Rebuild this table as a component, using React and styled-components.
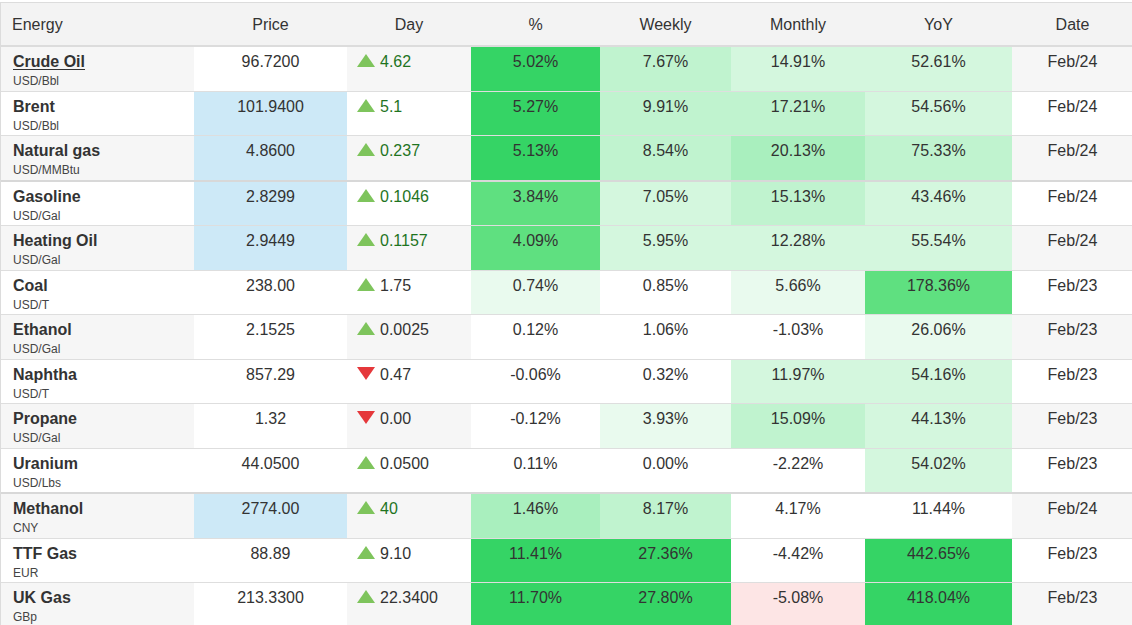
import React from 'react';
import styled, { createGlobalStyle } from 'styled-components';

const Global = createGlobalStyle`
  html, body {
    margin: 0;
    padding: 0;
    background: #fff;
  }
  body {
    font-family: "Liberation Sans", Arial, sans-serif;
    color: #333;
    overflow: hidden;
  }
`;

const COLS = '193px 153px 124px 129px 131px 134px 147px 121px';

const SHADES = {
  g5: '#35d465',
  g4: '#5fe080',
  g3b: '#a9efbe',
  g3: '#c0f3cf',
  g2: '#d4f7de',
  g1: '#e9faee',
  r1: '#fde5e5',
  w: '#ffffff',
};

const Wrap = styled.div`
  padding-top: 2px;
  width: 1132px;
`;

const Table = styled.div`
  border-left: 1px solid #dcdcdc;
  border-top: 1px solid #dcdcdc;
`;

const HeadRow = styled.div`
  display: grid;
  grid-template-columns: ${COLS};
  height: 42px;
  background: #f3f3f3;
  border-bottom: 2px solid #dcdcdc;
`;

const HeadCell = styled.div`
  display: flex;
  align-items: center;
  justify-content: ${p => (p.$left ? 'flex-start' : 'center')};
  padding-left: ${p => (p.$left ? '11px' : '0')};
  padding-top: 2px;
  font-size: 16px;
  color: #333;
`;

const Row = styled.div`
  display: grid;
  grid-template-columns: ${COLS};
  height: 43.5px;
  border-bottom: ${p => (p.$thick ? '2px solid #d8d8d8' : '1px solid #dedede')};
`;

const Cell = styled.div`
  background: ${p => p.$bg || (p.$striped ? '#f6f6f6' : '#fff')};
  padding-top: 5px;
  text-align: center;
  font-size: 16px;
  line-height: 20px;
  color: #333;
  overflow: hidden;
`;

const NameCell = styled(Cell)`
  text-align: left;
  padding-left: 12px;
`;

const Name = styled.div`
  font-weight: bold;
  font-size: 16px;
  line-height: 20px;
  color: #333;
  text-decoration: ${p => (p.$hover ? 'underline' : 'none')};
  text-underline-offset: 2px;
`;

const Unit = styled.div`
  font-size: 12px;
  line-height: 14px;
  margin-top: 2px;
  color: #444;
`;

const DayCell = styled(Cell)`
  display: flex;
  align-items: flex-start;
  gap: 5px;
  text-align: left;
  padding-left: 10px;
`;

const DayValue = styled.span`
  color: ${p => (p.$fresh ? '#1f741f' : '#333')};
`;

const Arrow = styled.svg`
  margin-top: 2px;
  flex: none;
`;

const Up = () => (
  <Arrow width="18" height="13" viewBox="0 0 18 13">
    <polygon points="9,0 18,13 0,13" fill="#7ec45c" />
  </Arrow>
);

const Down = () => (
  <Arrow width="18" height="13" viewBox="0 0 18 13">
    <polygon points="0,0 18,0 9,13" fill="#e5383b" />
  </Arrow>
);

const rows = [
  { name: 'Crude Oil', unit: 'USD/Bbl', price: '96.7200', blue: false, day: '4.62', up: true, fresh: true,
    pct: ['5.02%', 'g5'], w: ['7.67%', 'g3'], m: ['14.91%', 'g2'], y: ['52.61%', 'g2'], date: 'Feb/24', hover: true },
  { name: 'Brent', unit: 'USD/Bbl', price: '101.9400', blue: true, day: '5.1', up: true, fresh: true,
    pct: ['5.27%', 'g5'], w: ['9.91%', 'g3'], m: ['17.21%', 'g3'], y: ['54.56%', 'g2'], date: 'Feb/24' },
  { name: 'Natural gas', unit: 'USD/MMBtu', price: '4.8600', blue: true, day: '0.237', up: true, fresh: true,
    pct: ['5.13%', 'g5'], w: ['8.54%', 'g3'], m: ['20.13%', 'g3b'], y: ['75.33%', 'g3'], date: 'Feb/24', thick: true },
  { name: 'Gasoline', unit: 'USD/Gal', price: '2.8299', blue: true, day: '0.1046', up: true, fresh: true,
    pct: ['3.84%', 'g4'], w: ['7.05%', 'g2'], m: ['15.13%', 'g3'], y: ['43.46%', 'g2'], date: 'Feb/24' },
  { name: 'Heating Oil', unit: 'USD/Gal', price: '2.9449', blue: true, day: '0.1157', up: true, fresh: true,
    pct: ['4.09%', 'g4'], w: ['5.95%', 'g2'], m: ['12.28%', 'g2'], y: ['55.54%', 'g2'], date: 'Feb/24' },
  { name: 'Coal', unit: 'USD/T', price: '238.00', blue: false, day: '1.75', up: true, fresh: false,
    pct: ['0.74%', 'g1'], w: ['0.85%', 'w'], m: ['5.66%', 'g1'], y: ['178.36%', 'g4'], date: 'Feb/23' },
  { name: 'Ethanol', unit: 'USD/Gal', price: '2.1525', blue: false, day: '0.0025', up: true, fresh: false,
    pct: ['0.12%', 'w'], w: ['1.06%', 'w'], m: ['-1.03%', 'w'], y: ['26.06%', 'g1'], date: 'Feb/23' },
  { name: 'Naphtha', unit: 'USD/T', price: '857.29', blue: false, day: '0.47', up: false, fresh: false,
    pct: ['-0.06%', 'w'], w: ['0.32%', 'w'], m: ['11.97%', 'g2'], y: ['54.16%', 'g2'], date: 'Feb/23' },
  { name: 'Propane', unit: 'USD/Gal', price: '1.32', blue: false, day: '0.00', up: false, fresh: false,
    pct: ['-0.12%', 'w'], w: ['3.93%', 'g1'], m: ['15.09%', 'g3'], y: ['44.13%', 'g2'], date: 'Feb/23' },
  { name: 'Uranium', unit: 'USD/Lbs', price: '44.0500', blue: false, day: '0.0500', up: true, fresh: false,
    pct: ['0.11%', 'w'], w: ['0.00%', 'w'], m: ['-2.22%', 'w'], y: ['54.02%', 'g2'], date: 'Feb/23', thick: true },
  { name: 'Methanol', unit: 'CNY', price: '2774.00', blue: true, day: '40', up: true, fresh: true,
    pct: ['1.46%', 'g3b'], w: ['8.17%', 'g3'], m: ['4.17%', 'w'], y: ['11.44%', 'w'], date: 'Feb/24' },
  { name: 'TTF Gas', unit: 'EUR', price: '88.89', blue: false, day: '9.10', up: true, fresh: false,
    pct: ['11.41%', 'g5'], w: ['27.36%', 'g5'], m: ['-4.42%', 'w'], y: ['442.65%', 'g5'], date: 'Feb/23' },
  { name: 'UK Gas', unit: 'GBp', price: '213.3300', blue: false, day: '22.3400', up: true, fresh: false,
    pct: ['11.70%', 'g5'], w: ['27.80%', 'g5'], m: ['-5.08%', 'r1'], y: ['418.04%', 'g5'], date: 'Feb/23' },
];

const headers = ['Price', 'Day', '%', 'Weekly', 'Monthly', 'YoY', 'Date'];

export default function App() {
  return (
    <Wrap>
      <Global />
      <Table>
        <HeadRow>
          <HeadCell $left>Energy</HeadCell>
          {headers.map(h => (
            <HeadCell key={h}>{h}</HeadCell>
          ))}
        </HeadRow>
        {rows.map((r, i) => {
          const striped = i % 2 === 0;
          return (
            <Row key={r.name} $thick={r.thick}>
              <NameCell $striped={striped}>
                <Name $hover={r.hover}>{r.name}</Name>
                <Unit>{r.unit}</Unit>
              </NameCell>
              <Cell $bg={r.blue ? '#cde9f7' : '#fff'}>{r.price}</Cell>
              <DayCell $striped={striped}>
                {r.up ? <Up /> : <Down />}
                <DayValue $fresh={r.fresh}>{r.day}</DayValue>
              </DayCell>
              <Cell $bg={SHADES[r.pct[1]]}>{r.pct[0]}</Cell>
              <Cell $bg={SHADES[r.w[1]]}>{r.w[0]}</Cell>
              <Cell $bg={SHADES[r.m[1]]}>{r.m[0]}</Cell>
              <Cell $bg={SHADES[r.y[1]]}>{r.y[0]}</Cell>
              <Cell $striped={striped}>{r.date}</Cell>
            </Row>
          );
        })}
      </Table>
    </Wrap>
  );
}
